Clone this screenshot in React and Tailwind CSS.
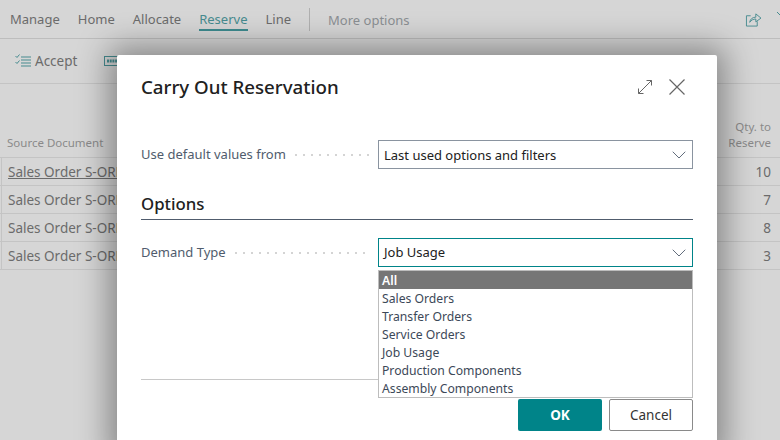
import { ChevronDown } from 'lucide-react'

const font = { fontFamily: '"Noto Sans", "Open Sans", sans-serif' }

const tabs = ['Manage', 'Home', 'Allocate', 'Reserve', 'Line']
const rows = [10, 7, 8, 3]
const options = ['Sales Orders', 'Transfer Orders', 'Service Orders', 'Job Usage', 'Production Components', 'Assembly Components']

const Leader = () => (
  <div className="ml-[9px] mr-[8px] h-[2px] flex-1 bg-[linear-gradient(90deg,#d4d4d4_2px,transparent_2px)] bg-[length:8px_2px]" />
)

const SelectBox = ({ value, active }) => (
  <div className={`flex h-[29px] w-[315px] items-center justify-between border pl-[5px] pr-[1px] text-[13px] text-[#212121] ${active ? 'border-[#008489]' : 'border-[#8a94a0]'}`}>
    <span className={active ? 'pt-px' : 'pt-[3px]'}>{value}</span>
    <ChevronDown size={24} strokeWidth={0.9} className="text-[#505c6d]" />
  </div>
)

export default function App() {
  return (
    <div className="relative h-[440px] w-[780px] overflow-hidden bg-[#d6d6d6] text-[#6b6b6b]" style={font}>
      {/* page behind the dialog */}
      <div className="flex h-[39px] items-center justify-between border-b border-[#bdbdbd] pl-[10px]">
        <div className="flex items-center text-[13px]">
          {tabs.map((t) => (
            <span key={t} className={`mr-[18px] flex h-[24px] items-center pt-[3px] ${t === 'Reserve' ? 'border-b-2 border-[#3d8a8e] text-[#468b8f]' : 'border-b-2 border-transparent'}`}>{t}</span>
          ))}
          <div className="h-[23px] w-px bg-[#b0b0b0]" />
          <span className="ml-[18px] pt-[3px] text-[#8a8e92]">More options</span>
        </div>
        <div className="-mr-[5px] flex items-center gap-[16px]">
          <svg width="16" height="15" viewBox="0 0 17 16" fill="none" stroke="#468b8f" strokeWidth="1">
            <path d="M6 4H1.500V15H13V10" />
            <path d="M5 11C5.500 7.500 8 5.500 11.500 5.500V2L17 6.500L11.500 10.500V7.500C9 7.500 6.500 8.500 5 11Z" />
          </svg>
          <svg width="8" height="16" viewBox="0 0 8 16" fill="none" stroke="#468b8f" strokeWidth="1">
            <path d="M0 1L4 5L8 1" />
          </svg>
        </div>
      </div>

      <div className="flex h-[45px] items-center gap-[3px] border-b border-[#c4c4c4] pl-[15px]">
        <svg width="17" height="14" viewBox="0 0 17 14" fill="none" stroke="#468b8f" strokeWidth="1">
          <path d="M0.500 2L2 3.500L4.500 0.500M0.500 8L2 9.500L4.500 6.500" />
          <path d="M6 3H16M6 6H16M6 9H16M6 12H16" />
        </svg>
        <span className="text-[13.500px]">Accept</span>
        <svg width="14" height="12" viewBox="0 0 14 12" className="ml-[24px]" fill="none" stroke="#468b8f">
          <rect x="0.500" y="1.500" width="13" height="9" />
          <path d="M3 6H13" strokeWidth="3" strokeDasharray="2 0.700" />
        </svg>
      </div>

      <div className="flex items-end justify-between border-b border-[#c4c4c4] pt-[35px] pb-[6px] pl-[7px] pr-[9px] text-[11.500px] leading-[16px] text-[#8a8a8a]">
        <span>Source Document</span>
        <span className="text-right">Qty. to<br />Reserve</span>
      </div>

      {rows.map((qty, i) => (
        <div key={i} className="flex h-[28px] items-center justify-between border-b border-[#c4c4c4] pr-[9px] text-[13.500px]">
          <div className="ml-px flex h-full items-center border-l border-[#c4c4c4] pl-[6px] pt-[2px]">
            <span className={i === 0 ? 'underline' : ''}>Sales Order S-ORD101</span>
          </div>
          <span className="pt-[2px]">{qty}</span>
        </div>
      ))}

      {/* dialog */}
      <div className="absolute left-[117px] top-[55px] h-[400px] w-[600px] rounded-t-[2px] bg-white px-[24px] shadow-[0_0_32px_8px_rgba(0,0,0,0.38)]">
        <div className="flex h-[64px] items-center justify-between pr-[8px]">
          <h1 className="text-[18.700px] font-medium text-[#212121]">Carry Out Reservation</h1>
          <div className="flex items-center gap-[17px]">
            <svg width="14" height="14" viewBox="0 0 14 14" fill="none" stroke="#666" strokeWidth="1">
              <path d="M0.500 13.500L13.500 0.500M8.500 0.500H13.500V5.500M0.500 8.500V13.500H5.500" />
            </svg>
            <svg width="16" height="16" viewBox="0 0 16 16" fill="none" stroke="#666" strokeWidth="1.200">
              <path d="M0.500 0.500L15.500 15.500M15.500 0.500L0.500 15.500" />
            </svg>
          </div>
        </div>

        <div className="mt-[21px] flex items-center text-[13px] text-[#505c6d]">
          <span>Use default values from</span>
          <Leader />
          <SelectBox value="Last used options and filters" />
        </div>

        <h2 className="mt-[22px] border-b border-[#505c6d] pb-[3px] text-[16.800px] font-medium leading-[25px] text-[#212121]">Options</h2>

        <div className="relative mt-[18px] flex items-center text-[13px] text-[#505c6d]">
          <span>Demand Type</span>
          <Leader />
          <SelectBox value="Job Usage" active />
          <div className="absolute left-[237px] top-[32px] z-10 w-[315px] border border-[#bdbdbd] bg-white text-[12.200px] leading-[18px] text-[#3c4858]">
            <div className="h-[18px] bg-[#767676] pl-[3px] pt-px font-semibold text-white">All</div>
            {options.map((o) => (
              <div key={o} className="h-[18px] pl-[3px] pt-px">{o}</div>
            ))}
          </div>
        </div>

        <div className="mt-[112px] border-t border-[#c8c8c8]" />

        <div className="mt-[19px] flex justify-end gap-[7px]">
          <button className="h-[32px] w-[84px] rounded-[2px] bg-[#008489] text-[13.500px] font-bold text-white">OK</button>
          <button className="h-[32px] w-[84px] rounded-[2px] border border-[#8a8a8a] bg-white text-[13.500px] text-[#333]">Cancel</button>
        </div>
      </div>
    </div>
  )
}
